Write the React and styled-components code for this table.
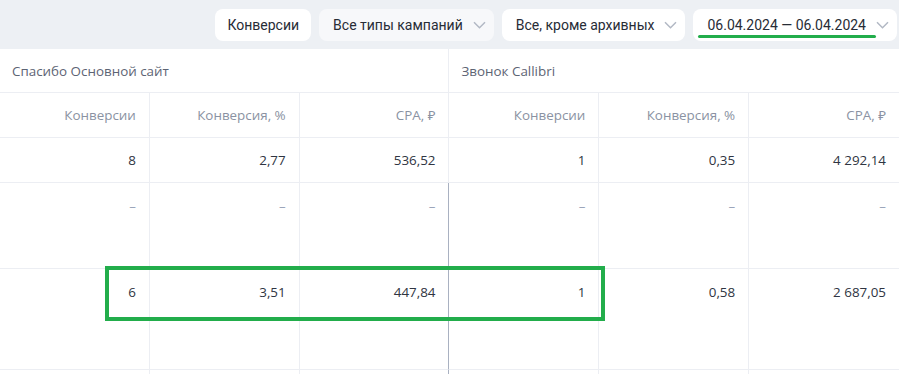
import React from 'react'
import styled, { createGlobalStyle } from 'styled-components'

const GlobalStyle = createGlobalStyle`
  html, body {
    margin: 0;
    padding: 0;
    background: #fff;
  }
  body {
    font-family: 'Open Sans', 'Noto Sans', sans-serif;
    -webkit-font-smoothing: antialiased;
  }
`

const palette = {
  bar: '#edf0f4',
  line: '#eceef3',
  strongLine: '#a9b1c1',
  head: '#8a92a2',
  group: '#5d6474',
  text: '#2f3542',
  dash: '#9ba5ba',
  chevron: '#b2b8c4',
  accent: '#22ad4b',
}

const Toolbar = styled.div`
  display: flex;
  justify-content: flex-end;
  align-items: center;
  gap: 8px;
  height: 49px;
  padding: 0 2px 0 0;
  background: ${palette.bar};
  box-sizing: border-box;
`

const FilterButton = styled.div`
  position: relative;
  display: flex;
  align-items: center;
  gap: 10px;
  height: 32px;
  padding: 0 ${({ chevron }) => chevron ? 8 : 12}px 0 ${({ chevron }) => chevron ? 14 : 12}px;
  border-radius: 8px;
  background: ${({ muted }) => muted ? '#f7f8fa' : '#fff'};
  font-family: Roboto, 'Noto Sans', sans-serif;
  font-size: 14px;
  color: #272c36;
  white-space: nowrap;
  box-sizing: border-box;
`

const Underline = styled.span`
  position: absolute;
  left: 5px;
  width: 178px;
  bottom: 3px;
  height: 3px;
  border-radius: 2px;
  background: ${palette.accent};
`

const Chevron = () => (
  <svg width="13" height="8" viewBox="0 0 13 8" fill="none">
    <path d="M1 1.2l5.5 5.5 5.5-5.5" stroke={palette.chevron} strokeWidth="1.5" />
  </svg>
)

const Table = styled.div`
  position: relative;
  display: grid;
  grid-template-columns: repeat(6, 1fr);
  grid-template-rows: 44px 45px 45px 86px 101px 40px;
`

const GroupCell = styled.div`
  grid-column: span 3;
  display: flex;
  align-items: center;
  padding: 0 12px;
  font-size: 13.4px;
  color: ${palette.group};
  border-bottom: 1px solid ${palette.line};
  border-right: ${({ last }) => last ? 'none' : `1px solid ${palette.line}`};
`

const Cell = styled.div`
  display: flex;
  justify-content: flex-end;
  align-items: ${({ top }) => top ? 'flex-start' : 'center'};
  padding: ${({ top }) => top ? '14px 13px 0' : '0 13px'};
  font-size: 13.4px;
  line-height: 18px;
  color: ${({ head, empty }) => head ? palette.head : empty ? palette.dash : palette.text};
  border-bottom: 1px solid ${palette.line};
  border-right: ${({ last }) => last ? 'none' : `1px solid ${palette.line}`};
  border-left: ${({ divider }) => divider ? `1px solid ${palette.strongLine}` : 'none'};
  margin-left: ${({ divider }) => divider ? '-1px' : '0'};
  box-sizing: border-box;
`

const Highlight = styled.div`
  position: absolute;
  left: 105px;
  top: 217px;
  width: 500px;
  height: 55px;
  border: 4.5px solid ${palette.accent};
  box-sizing: border-box;
  pointer-events: none;
`

const headers = ['Конверсии', 'Конверсия, %', 'CPA, ₽']

const rows = [
  { top: false, values: ['8', '2,77', '536,52', '1', '0,35', '4 292,14'] },
  { top: true, divider: true, values: ['–', '–', '–', '–', '–', '–'], empty: true },
  { top: true, divider: true, values: ['6', '3,51', '447,84', '1', '0,58', '2 687,05'] },
  { top: true, divider: true, values: ['', '', '', '', '', ''] },
]

export default function App() {
  return (
    <>
      <GlobalStyle />
      <Toolbar>
        <FilterButton>Конверсии</FilterButton>
        <FilterButton chevron muted>Все типы кампаний <Chevron /></FilterButton>
        <FilterButton chevron>Все, кроме архивных <Chevron /></FilterButton>
        <FilterButton chevron>
          06.04.2024 — 06.04.2024 <Chevron />
          <Underline />
        </FilterButton>
      </Toolbar>
      <Table>
        <GroupCell>Спасибо Основной сайт</GroupCell>
        <GroupCell last>Звонок Callibri</GroupCell>
        {[...headers, ...headers].map((h, i) => (
          <Cell key={'h' + i} head last={i === 5}>{h}</Cell>
        ))}
        {rows.map((row, r) =>
          row.values.map((v, i) => (
            <Cell
              key={r + '-' + i}
              top={row.top}
              empty={row.empty}
              last={i === 5}
              divider={row.divider && i === 3}
            >
              {v}
            </Cell>
          ))
        )}
        <Highlight />
      </Table>
    </>
  )
}
